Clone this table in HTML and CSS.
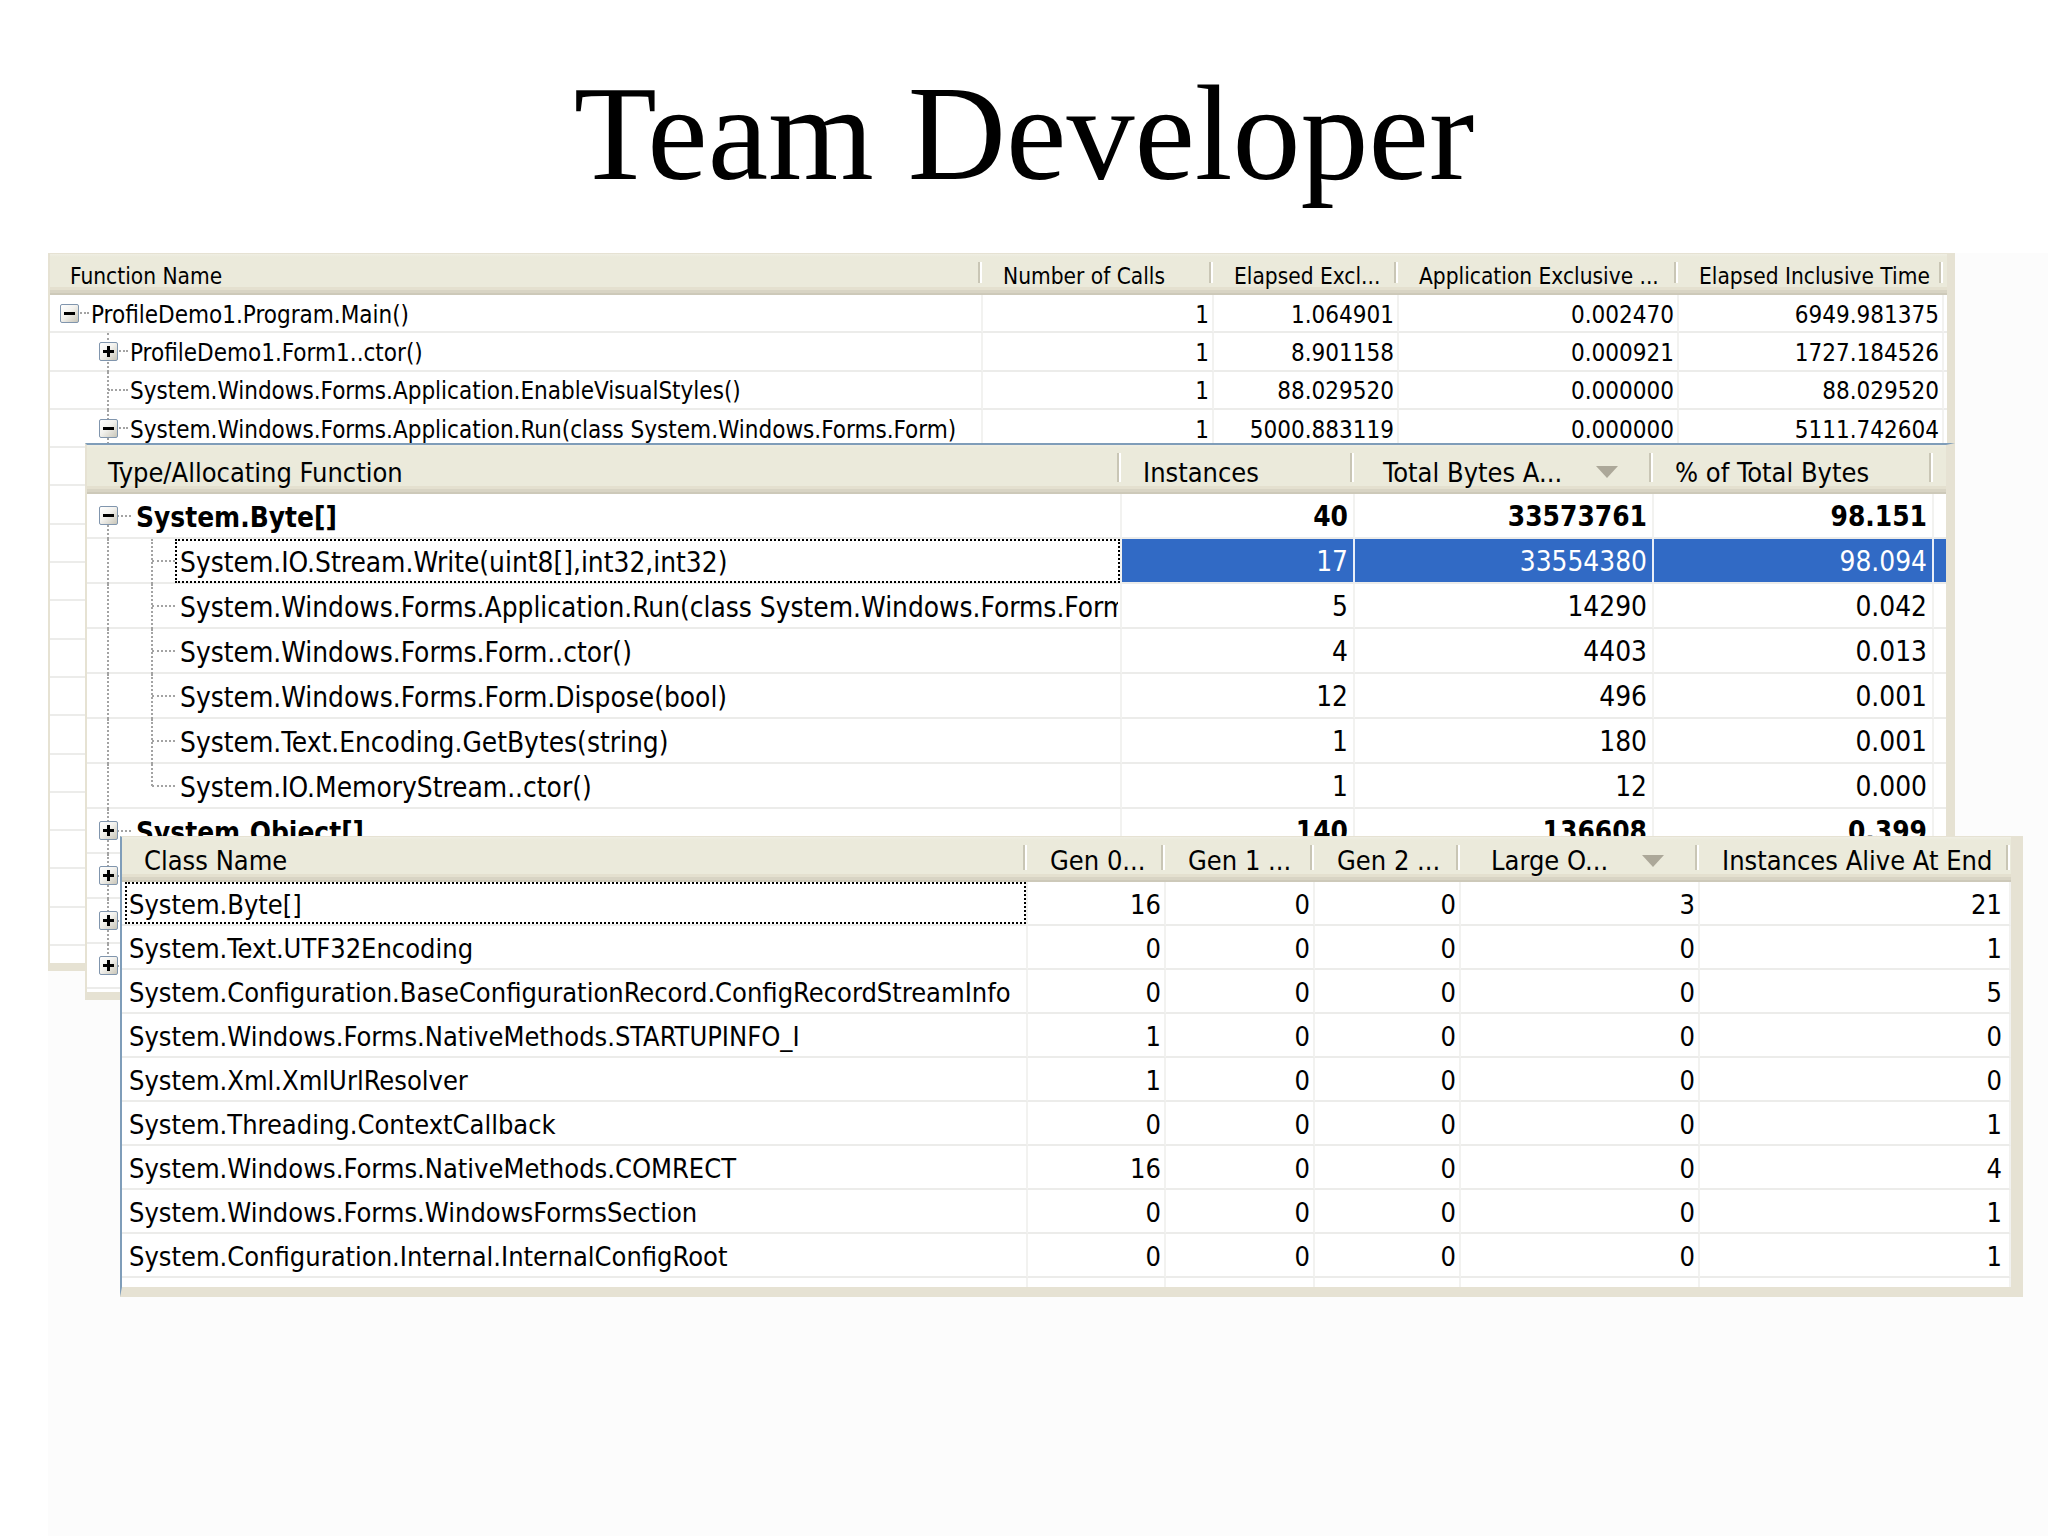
FILE: index.html
```html
<!DOCTYPE html>
<html lang="en">
<head>
<meta charset="utf-8">
<title>Team Developer</title>
<link rel="stylesheet" href="styles.css">
</head>
<body>
<h1 class="title">Team Developer</h1>
<div class="stage">

  <section class="win win-calls ui">
    <div class="hdr">
      <div class="hc">Function Name</div>
      <div class="hc">Number of Calls</div>
      <div class="hc">Elapsed Excl...</div>
      <div class="hc">Application Exclusive ...</div>
      <div class="hc">Elapsed Inclusive Time</div>
      <div class="hc rest"></div>
    </div>
    <div class="row">
      <div class="c name"><span class="g h"><i class="xb minus"></i></span><span class="tx">ProfileDemo1.Program.Main()</span></div>
      <div class="c num">1</div><div class="c num">1.064901</div><div class="c num">0.002470</div><div class="c num">6949.981375</div><div class="c rest"></div>
    </div>
    <div class="row">
      <div class="c name"><span class="g"></span><span class="g t"><i class="xb plus"></i></span><span class="tx">ProfileDemo1.Form1..ctor()</span></div>
      <div class="c num">1</div><div class="c num">8.901158</div><div class="c num">0.000921</div><div class="c num">1727.184526</div><div class="c rest"></div>
    </div>
    <div class="row">
      <div class="c name"><span class="g"></span><span class="g t"></span><span class="tx">System.Windows.Forms.Application.EnableVisualStyles()</span></div>
      <div class="c num">1</div><div class="c num">88.029520</div><div class="c num">0.000000</div><div class="c num">88.029520</div><div class="c rest"></div>
    </div>
    <div class="row">
      <div class="c name"><span class="g"></span><span class="g t"><i class="xb minus"></i></span><span class="tx">System.Windows.Forms.Application.Run(class System.Windows.Forms.Form)</span></div>
      <div class="c num">1</div><div class="c num">5000.883119</div><div class="c num">0.000000</div><div class="c num">5111.742604</div><div class="c rest"></div>
    </div>
    <div class="row"><div class="c name"></div><div class="c num"></div><div class="c num"></div><div class="c num"></div><div class="c num"></div><div class="c rest"></div></div>
    <div class="row"><div class="c name"></div><div class="c num"></div><div class="c num"></div><div class="c num"></div><div class="c num"></div><div class="c rest"></div></div>
    <div class="row"><div class="c name"></div><div class="c num"></div><div class="c num"></div><div class="c num"></div><div class="c num"></div><div class="c rest"></div></div>
    <div class="row"><div class="c name"></div><div class="c num"></div><div class="c num"></div><div class="c num"></div><div class="c num"></div><div class="c rest"></div></div>
    <div class="row"><div class="c name"></div><div class="c num"></div><div class="c num"></div><div class="c num"></div><div class="c num"></div><div class="c rest"></div></div>
    <div class="row"><div class="c name"></div><div class="c num"></div><div class="c num"></div><div class="c num"></div><div class="c num"></div><div class="c rest"></div></div>
    <div class="row"><div class="c name"></div><div class="c num"></div><div class="c num"></div><div class="c num"></div><div class="c num"></div><div class="c rest"></div></div>
    <div class="row"><div class="c name"></div><div class="c num"></div><div class="c num"></div><div class="c num"></div><div class="c num"></div><div class="c rest"></div></div>
    <div class="row"><div class="c name"></div><div class="c num"></div><div class="c num"></div><div class="c num"></div><div class="c num"></div><div class="c rest"></div></div>
    <div class="row"><div class="c name"></div><div class="c num"></div><div class="c num"></div><div class="c num"></div><div class="c num"></div><div class="c rest"></div></div>
    <div class="row"><div class="c name"></div><div class="c num"></div><div class="c num"></div><div class="c num"></div><div class="c num"></div><div class="c rest"></div></div>
    <div class="row"><div class="c name"></div><div class="c num"></div><div class="c num"></div><div class="c num"></div><div class="c num"></div><div class="c rest"></div></div>
    <div class="row"><div class="c name"></div><div class="c num"></div><div class="c num"></div><div class="c num"></div><div class="c num"></div><div class="c rest"></div></div>
    <div class="row"><div class="c name"></div><div class="c num"></div><div class="c num"></div><div class="c num"></div><div class="c num"></div><div class="c rest"></div></div>
  </section>

  <section class="win win-alloc ui">
    <div class="hdr">
      <div class="hc">Type/Allocating Function</div>
      <div class="hc">Instances</div>
      <div class="hc sorted wide">Total Bytes A...<i class="arrow"></i></div>
      <div class="hc">% of Total Bytes</div>
      <div class="hc rest"></div>
    </div>
    <div class="row bold">
      <div class="c name"><span class="g d"><i class="xb minus"></i></span><span class="tx">System.Byte[]</span></div>
      <div class="c num">40</div><div class="c num">33573761</div><div class="c num">98.151</div><div class="c rest"></div>
    </div>
    <div class="row sel">
      <div class="c name"><span class="g v"></span><span class="g t"></span><span class="tx focus">System.IO.Stream.Write(uint8[],int32,int32)</span></div>
      <div class="c num">17</div><div class="c num">33554380</div><div class="c num">98.094</div><div class="c rest"></div>
    </div>
    <div class="row">
      <div class="c name"><span class="g v"></span><span class="g t"></span><span class="tx">System.Windows.Forms.Application.Run(class System.Windows.Forms.Form)</span></div>
      <div class="c num">5</div><div class="c num">14290</div><div class="c num">0.042</div><div class="c rest"></div>
    </div>
    <div class="row">
      <div class="c name"><span class="g v"></span><span class="g t"></span><span class="tx">System.Windows.Forms.Form..ctor()</span></div>
      <div class="c num">4</div><div class="c num">4403</div><div class="c num">0.013</div><div class="c rest"></div>
    </div>
    <div class="row">
      <div class="c name"><span class="g v"></span><span class="g t"></span><span class="tx">System.Windows.Forms.Form.Dispose(bool)</span></div>
      <div class="c num">12</div><div class="c num">496</div><div class="c num">0.001</div><div class="c rest"></div>
    </div>
    <div class="row">
      <div class="c name"><span class="g v"></span><span class="g t"></span><span class="tx">System.Text.Encoding.GetBytes(string)</span></div>
      <div class="c num">1</div><div class="c num">180</div><div class="c num">0.001</div><div class="c rest"></div>
    </div>
    <div class="row">
      <div class="c name"><span class="g v"></span><span class="g l"></span><span class="tx">System.IO.MemoryStream..ctor()</span></div>
      <div class="c num">1</div><div class="c num">12</div><div class="c num">0.000</div><div class="c rest"></div>
    </div>
    <div class="row bold">
      <div class="c name"><span class="g t"><i class="xb plus"></i></span><span class="tx">System.Object[]</span></div>
      <div class="c num">140</div><div class="c num">136608</div><div class="c num">0.399</div><div class="c rest"></div>
    </div>
    <div class="row bold">
      <div class="c name"><span class="g t"><i class="xb plus"></i></span><span class="tx"></span></div>
      <div class="c num"></div><div class="c num"></div><div class="c num"></div><div class="c rest"></div>
    </div>
    <div class="row bold">
      <div class="c name"><span class="g t"><i class="xb plus"></i></span><span class="tx"></span></div>
      <div class="c num"></div><div class="c num"></div><div class="c num"></div><div class="c rest"></div>
    </div>
    <div class="row bold">
      <div class="c name"><span class="g l"><i class="xb plus"></i></span><span class="tx"></span></div>
      <div class="c num"></div><div class="c num"></div><div class="c num"></div><div class="c rest"></div>
    </div>
  </section>

  <section class="win win-class ui">
    <div class="hdr">
      <div class="hc">Class Name</div>
      <div class="hc">Gen 0...</div>
      <div class="hc">Gen 1 ...</div>
      <div class="hc">Gen 2 ...</div>
      <div class="hc sorted wide">Large O...<i class="arrow"></i></div>
      <div class="hc">Instances Alive At End</div>
      <div class="hc rest"></div>
    </div>
    <div class="row">
      <div class="c name"><span class="tx focus">System.Byte[]</span></div>
      <div class="c num">16</div><div class="c num">0</div><div class="c num">0</div><div class="c num">3</div><div class="c num last">21</div><div class="c rest"></div>
    </div>
    <div class="row">
      <div class="c name"><span class="tx">System.Text.UTF32Encoding</span></div>
      <div class="c num">0</div><div class="c num">0</div><div class="c num">0</div><div class="c num">0</div><div class="c num last">1</div><div class="c rest"></div>
    </div>
    <div class="row">
      <div class="c name"><span class="tx">System.Configuration.BaseConfigurationRecord.ConfigRecordStreamInfo</span></div>
      <div class="c num">0</div><div class="c num">0</div><div class="c num">0</div><div class="c num">0</div><div class="c num last">5</div><div class="c rest"></div>
    </div>
    <div class="row">
      <div class="c name"><span class="tx">System.Windows.Forms.NativeMethods.STARTUPINFO_I</span></div>
      <div class="c num">1</div><div class="c num">0</div><div class="c num">0</div><div class="c num">0</div><div class="c num last">0</div><div class="c rest"></div>
    </div>
    <div class="row">
      <div class="c name"><span class="tx">System.Xml.XmlUrlResolver</span></div>
      <div class="c num">1</div><div class="c num">0</div><div class="c num">0</div><div class="c num">0</div><div class="c num last">0</div><div class="c rest"></div>
    </div>
    <div class="row">
      <div class="c name"><span class="tx">System.Threading.ContextCallback</span></div>
      <div class="c num">0</div><div class="c num">0</div><div class="c num">0</div><div class="c num">0</div><div class="c num last">1</div><div class="c rest"></div>
    </div>
    <div class="row">
      <div class="c name"><span class="tx">System.Windows.Forms.NativeMethods.COMRECT</span></div>
      <div class="c num">16</div><div class="c num">0</div><div class="c num">0</div><div class="c num">0</div><div class="c num last">4</div><div class="c rest"></div>
    </div>
    <div class="row">
      <div class="c name"><span class="tx">System.Windows.Forms.WindowsFormsSection</span></div>
      <div class="c num">0</div><div class="c num">0</div><div class="c num">0</div><div class="c num">0</div><div class="c num last">1</div><div class="c rest"></div>
    </div>
    <div class="row">
      <div class="c name"><span class="tx">System.Configuration.Internal.InternalConfigRoot</span></div>
      <div class="c num">0</div><div class="c num">0</div><div class="c num">0</div><div class="c num">0</div><div class="c num last">1</div><div class="c rest"></div>
    </div>
    <div class="row">
      <div class="c name"></div>
      <div class="c num"></div><div class="c num"></div><div class="c num"></div><div class="c num"></div><div class="c num last"></div><div class="c rest"></div>
    </div>
  </section>

</div>
</body>
</html>
```

FILE: styles.css
```css
* { box-sizing: border-box; }

html, body {
  margin: 0;
  padding: 0;
  background: #ffffff;
}

body {
  width: 2048px;
  height: 1536px;
  overflow: hidden;
}

.title {
  margin: 0;
  height: 253px;
  padding-top: 65px;
  font-family: "Liberation Serif", "Times New Roman", serif;
  font-weight: normal;
  font-size: 136px;
  line-height: 136px;
  text-align: center;
  color: #000;
}

.stage {
  position: relative;
  margin-left: 48px;
  height: 1283px;
  background: #fcfcfc;
}

.ui {
  font-family: "DejaVu Sans Condensed", "DejaVu Sans", sans-serif;
  font-stretch: semi-condensed;
  color: #000;
}

/* ---------- windows ---------- */
.win {
  position: absolute;
  overflow: hidden;
  background: #fff;
  border-style: solid;
  border-color: #e6e2d3;
}

.win-calls {
  left: 0;
  top: 0;
  width: 1907px;
  height: 718px;
  border-width: 1px 8px 8px 2px;
  font-size: 22.5px;
  --cols: 933px 231px 185px 280px 265px 3px;
  --hh: 41px;
  --rh: 38.3px;
  --gw: 39px;
  --gc: 19px;
  --rfs: 24px;
  --pt: 3px;
  --pr: 3px;
}

.win-alloc {
  left: 37px;
  top: 190px;
  width: 1870px;
  height: 557px;
  border-width: 2px 9px 8px 2px;
  border-top-color: #7f9db9;
  font-size: 27px;
  --cols: 1035px 233px 299px 280px 12px;
  --hh: 49px;
  --rh: 45px;
  --gw: 44px;
  --gc: 21px;
  --rfs: 27.8px;
  --pt: 2px;
  --pr: 5px;
}

.win-class {
  left: 72px;
  top: 583px;
  width: 1903px;
  height: 461px;
  border-width: 1px 12px 10px 2px;
  border-left-color: #7f9db9;
  font-size: 27px;
  --cols: 906px 138px 149px 146px 239px 311px 0px;
  --hh: 45px;
  --rh: 44px;
  --rfs: 27px;
  --pt: 2px;
  --pr: 3px;
}

/* ---------- header ---------- */
.hdr {
  display: grid;
  grid-template-columns: var(--cols);
  height: var(--hh);
  background: linear-gradient(to bottom,
    #efeee3 0,
    #ebeadb 3px,
    #ebeadb calc(100% - 8px),
    #e4e0cf calc(100% - 8px),
    #e4e0cf calc(100% - 5px),
    #d8d4c4 calc(100% - 5px),
    #d8d4c4 calc(100% - 2px),
    #cdc9b9 calc(100% - 2px));
}

.hc {
  position: relative;
  display: flex;
  align-items: center;
  padding: 3px 0 0 20px;
  white-space: nowrap;
  overflow: hidden;
}

.win-alloc .hc { padding-left: 21px; padding-top: 5px; }
.win-class .hc { padding-top: 2px; padding-left: 22px; }
.win-alloc .hc.wide { padding-left: 28px; }
.win-class .hc.wide { padding-left: 30px; }

.hc::after {
  content: "";
  position: absolute;
  right: 3px;
  top: 8px;
  bottom: 12px;
  width: 2px;
  background: #c9c6b5;
  box-shadow: 2px 0 0 #ffffff;
}

.hc.rest::after { display: none; }

.hc.sorted { padding-right: 36px; }

.arrow {
  margin-left: auto;
  width: 0;
  height: 0;
  border-left: 11px solid transparent;
  border-right: 11px solid transparent;
  border-top: 12px solid #aca899;
}

/* ---------- rows ---------- */
.row {
  display: grid;
  grid-template-columns: var(--cols);
  height: var(--rh);
  font-size: var(--rfs);
}

.c {
  border-right: 2px solid #f2f2f0;
  border-bottom: 2px solid #ececea;
  white-space: nowrap;
  display: flex;
  align-items: center;
  min-width: 0;
  padding-top: var(--pt);
}

.c.num {
  justify-content: flex-end;
  padding-right: var(--pr);
}

.win-class .c.num.last { padding-right: 7px; }

.c.rest { border-right: 0; }

.row.bold { font-weight: bold; }

.row.sel .c.num,
.row.sel .c.rest {
  background: #316ac5;
  color: #ffffff;
  border-right-color: #e8eef8;
}

.tx {
  overflow: hidden;
  min-width: 0;
  flex: 1;
  padding-left: 2px;
}

.win-alloc .c.name,
.win-class .c.name {
  padding-top: 0;
}

.win-alloc .tx {
  align-self: stretch;
  display: flex;
  align-items: center;
  border: 2px solid transparent;
  padding-left: 3px;
  padding-top: var(--pt);
  margin-bottom: -1px;
}

.win-class .tx {
  align-self: stretch;
  display: flex;
  align-items: center;
  margin-left: 3px;
  border: 2px solid transparent;
  padding-left: 2px;
  padding-top: var(--pt);
}

.tx.focus {
  border: 2px dotted #000;
}

/* ---------- tree gutter ---------- */
.g {
  position: relative;
  flex: none;
  width: var(--gw);
  align-self: stretch;
  display: flex;
  align-items: center;
}

.win-calls .g { margin-top: calc(-1 * var(--pt)); }

.g::before,
.g::after {
  content: "";
  position: absolute;
  display: none;
}

/* vertical line */
.g.v::before,
.g.t::before,
.g.l::before,
.g.d::before {
  display: block;
  left: calc(var(--gc) - 1px);
  width: 0;
  border-left: 2px dotted #a3a3a3;
  top: 0;
  bottom: -2px;
}

.g.l::before { bottom: 50%; }
.g.d::before { top: 50%; }

/* horizontal line */
.g.h::after,
.g.t::after,
.g.l::after,
.g.d::after {
  display: block;
  left: var(--gc);
  right: 0;
  top: calc(50% - 1px);
  height: 0;
  border-top: 2px dotted #a3a3a3;
}

/* expander box */
.xb {
  position: relative;
  z-index: 1;
  width: 19px;
  height: 19px;
  margin-left: calc(var(--gc) - 9px);
  border: 1px solid #8095ad;
  border-radius: 2px;
  background: linear-gradient(135deg, #ffffff 0%, #f3f2ee 45%, #c8c5b8 100%);
}

.xb::before,
.xb::after {
  content: "";
  position: absolute;
  background: #000;
}

.xb::before {
  left: 3px;
  right: 3px;
  top: 7px;
  height: 3px;
}

.xb.plus::after {
  top: 3px;
  bottom: 3px;
  left: 7px;
  width: 3px;
}
```
